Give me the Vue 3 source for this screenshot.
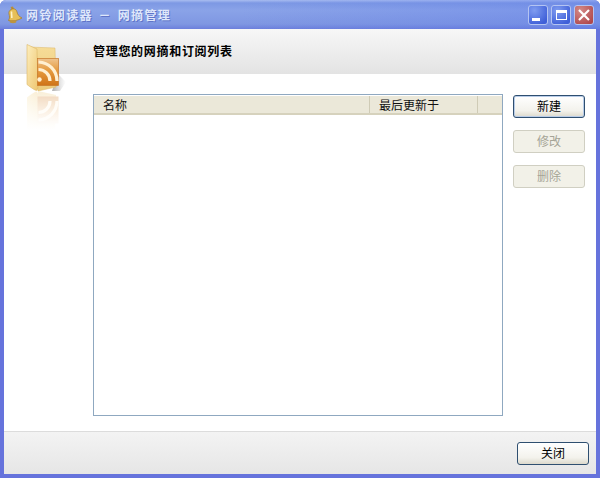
<template>
  <div class="window">
    <!-- 标题栏 -->
    <div class="titlebar">
      <svg class="bell" width="16" height="18" viewBox="0 0 16 18">
        <path d="M3.5 1 L6 0.5 L7 3 L5 4 Z" fill="#b98f36"/>
        <path d="M4 3.5 C7 1.8 9.5 3.5 10 6 C10.5 8.5 12 10.5 15 12 C11 14.5 6 15.5 1.5 14.5 C3 12 2.5 10 2 8 C1.6 6 2.4 4.4 4 3.5 Z" fill="#e6bf58" stroke="#a47a22" stroke-width="0.7"/>
        <ellipse cx="6" cy="15.6" rx="3.4" ry="1.7" fill="#bd9440"/>
        <path d="M4.6 5.5 C4.2 7.5 5 9.5 4.8 12" stroke="#fdf3c8" stroke-width="1.6" fill="none"/>
      </svg>
      <span class="title">网铃阅读器 － 网摘管理</span>
      <div class="controls">
        <div class="ctl blue">
          <span class="min-mark"></span>
        </div>
        <div class="ctl blue">
          <span class="max-mark"></span>
        </div>
        <div class="ctl red">
          <svg width="14" height="14" viewBox="0 0 14 14">
            <path d="M2 2 L12 12 M12 2 L2 12" stroke="#fff" stroke-width="2.2"/>
          </svg>
        </div>
      </div>
    </div>

    <div class="client">
      <div class="head">
        <b>管理您的网摘和订阅列表</b>
      </div>

      <!-- 文件夹图标和倒影，压在页头和内容区之间 -->
      <svg class="logo" width="42" height="86" viewBox="0 0 42 86">
        <defs>
          <linearGradient id="fold" x1="0" y1="0" x2="1" y2="1">
            <stop offset="0" stop-color="#fdeebd"/>
            <stop offset="1" stop-color="#eec670"/>
          </linearGradient>
          <linearGradient id="back" x1="0" y1="0" x2="0" y2="1">
            <stop offset="0" stop-color="#f6dc97"/>
            <stop offset="1" stop-color="#eccb7c"/>
          </linearGradient>
          <linearGradient id="rss" x1="0" y1="0" x2="0" y2="1">
            <stop offset="0" stop-color="#efc48e"/>
            <stop offset="0.45" stop-color="#e59a3e"/>
            <stop offset="1" stop-color="#cf7418"/>
          </linearGradient>
          <linearGradient id="fade" x1="0" y1="0" x2="0" y2="1">
            <stop offset="0" stop-color="#fff" stop-opacity="0.35"/>
            <stop offset="1" stop-color="#fff" stop-opacity="1"/>
          </linearGradient>
          <linearGradient id="shade" x1="0" y1="0" x2="1" y2="0">
            <stop offset="0" stop-color="#9a9a9a" stop-opacity="0.8"/>
            <stop offset="1" stop-color="#bbb" stop-opacity="0"/>
          </linearGradient>
        </defs>
        <path d="M32 30 L40 38 L34 47 L26 47 Z" fill="url(#shade)"/>
        <path d="M2 3 L29 4 L30 43 L12 47 Z" fill="url(#back)" stroke="#dcb767" stroke-width="0.5"/>
        <path d="M1 0.5 L11 5 L12 44 L10.5 46.5 Q8 46 1 40.5 Z" fill="url(#fold)" stroke="#dcb767" stroke-width="0.6"/>
        <rect x="11.5" y="14.5" width="21" height="27" fill="url(#rss)" stroke="#c6772a" stroke-width="0.7"/>
        <path d="M12.5 18 A19 19 0 0 1 31 37" stroke="#fff0d2" stroke-width="3.2" fill="none"/>
        <path d="M12.5 25.5 A11.5 11.5 0 0 1 24 37" stroke="#fff0d2" stroke-width="3.2" fill="none"/>
        <circle cx="13.5" cy="35.5" r="2.2" fill="#fff0d2"/>
        <g transform="translate(0 94) scale(1 -1)" opacity="0.45">
          <path d="M2 3 L29 4 L30 43 L12 47 Z" fill="url(#back)"/>
          <path d="M1 0.5 L11 5 L12 44 L10.5 46.5 Q8 46 1 40.5 Z" fill="url(#fold)"/>
          <rect x="11.5" y="14.5" width="21" height="27" fill="url(#rss)"/>
          <path d="M12.5 18 A19 19 0 0 1 31 37" stroke="#fff0d2" stroke-width="3.2" fill="none"/>
          <path d="M12.5 25.5 A11.5 11.5 0 0 1 24 37" stroke="#fff0d2" stroke-width="3.2" fill="none"/>
        </g>
        <rect x="0" y="47" width="42" height="39" fill="url(#fade)"/>
      </svg>

      <div class="body">
        <div class="list">
          <div class="list-head">
            <div v-for="col in columns" :key="col.name" class="col" :class="col.cls">{{ col.name }}</div>
          </div>
        </div>
        <div class="side">
          <button class="btn default">新建</button>
          <button class="btn off">修改</button>
          <button class="btn off">删除</button>
        </div>
      </div>

      <div class="foot">
        <button class="btn">关闭</button>
      </div>
    </div>
  </div>
</template>

<script setup>
// 表头列
const columns = [
  { name: '名称', cls: 'c-name' },
  { name: '最后更新于', cls: 'c-time' },
  { name: '', cls: 'c-rest' }
]
</script>

<style>
html, body {
  margin: 0;
  background: #fff;
}
</style>

<style scoped>
.window {
  width: 600px;
  height: 478px;
  box-sizing: border-box;
  display: flex;
  flex-direction: column;
  background: #6673dc;
  padding: 0 4px 4px;
  border-radius: 6px 6px 0 0;
  font-family: "Noto Sans CJK SC", "Liberation Sans", sans-serif;
  font-size: 12px;
  color: #000;
}
.titlebar {
  height: 29px;
  flex: none;
  margin: 0 -4px;
  padding: 0 6px 0 7px;
  display: flex;
  align-items: center;
  border-radius: 6px 6px 0 0;
  background:
    linear-gradient(90deg, rgba(90, 120, 235, 0) 40%, rgba(90, 120, 235, 0.35)),
    linear-gradient(#a9bdf0 0, #7d98e4 3px, #8aa3e8 10px, #7f97e2 24px, #6c7fdc 29px);
}
.bell {
  flex: none;
}
.title {
  margin-left: 3px;
  color: #dfe7fb;
  font-weight: 700;
  font-size: 12px;
  letter-spacing: 1.4px;
  word-spacing: 1.5px;
  text-shadow: 1px 1px 0 #5f74c8;
}
.controls {
  margin-left: auto;
  display: flex;
  gap: 3px;
}
.ctl {
  width: 20px;
  height: 20px;
  box-sizing: border-box;
  border: 1px solid #b4c4f2;
  border-radius: 3px;
  display: flex;
  align-items: center;
  justify-content: center;
  position: relative;
}
.blue {
  background: radial-gradient(circle at 30% 25%, #7f9cf0, #3f5fd8 80%);
}
.red {
  background: radial-gradient(circle at 30% 25%, #d48a88, #b0484c 85%);
}
.min-mark {
  width: 8px;
  height: 3px;
  background: #fff;
  align-self: flex-end;
  margin: 0 4px 3px 0;
}
.max-mark {
  width: 11px;
  height: 10px;
  box-sizing: border-box;
  border: 1px solid #fff;
  border-top-width: 3px;
}
.client {
  flex: 1;
  position: relative;
  display: flex;
  flex-direction: column;
  background: #fff;
  min-height: 0;
}
.head {
  height: 45px;
  flex: none;
  box-sizing: border-box;
  padding: 13px 0 0 89px;
  background: linear-gradient(#f7f7f7, #e3e3e3);
  line-height: 18px;
  font-size: 12px;
  letter-spacing: 0.7px;
}
.logo {
  position: absolute;
  left: 22px;
  top: 15px;
}
.body {
  flex: 1;
  display: flex;
  padding: 20px 11px 15px 89px;
  gap: 10px;
  min-height: 0;
}
.list {
  width: 410px;
  box-sizing: border-box;
  border: 1px solid #8fa8c0;
  padding-top: 1px;
  background: #fff;
}
.list-head {
  height: 19px;
  box-sizing: border-box;
  display: flex;
  background: #ebe8d9;
  border-bottom: 2px solid #d6d2bd;
}
.col {
  box-sizing: border-box;
  height: 17px;
  line-height: 17px;
  padding-left: 9px;
  font-size: 12px;
  color: #111;
}
.c-name {
  width: 275px;
}
.c-time {
  width: 109px;
  border-left: 1px solid #cfcbb6;
  border-right: 1px solid #cfcbb6;
}
.c-rest {
  flex: 1;
}
.side {
  display: flex;
  flex-direction: column;
  gap: 12px;
  width: 72px;
  padding-top: 1px;
}
.btn {
  width: 72px;
  height: 23px;
  padding: 0 0 2px;
  box-sizing: border-box;
  border: 1px solid #2f4f70;
  border-radius: 3px;
  background: linear-gradient(#fff, #f3f2ec 70%, #dcd9cc);
  font-family: inherit;
  font-size: 12px;
  color: #000;
}
.default {
  box-shadow: inset 0 0 0 1px #b8cce8;
}
.off {
  border-color: #d0cfc2;
  background: #f2f1e8;
  color: #a5a496;
}
.foot {
  height: 43px;
  flex: none;
  box-sizing: border-box;
  display: flex;
  justify-content: flex-end;
  padding: 10px 7px 0 0;
  border-top: 1px solid #dcdcdc;
  background: linear-gradient(#f3f3f3, #e6e6e6);
}
</style>
